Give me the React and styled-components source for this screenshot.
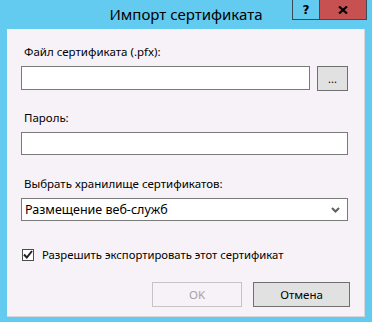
import React from 'react';
import styled, { createGlobalStyle } from 'styled-components';

const Global = createGlobalStyle`
  html, body {
    margin: 0;
    padding: 0;
    background: #63cbef;
  }
  * { box-sizing: border-box; }
`;

const Window = styled.div`
  width: 372px;
  height: 322px;
  background: #63cbef;
  display: flex;
  flex-direction: column;
  font-family: "Noto Sans", "Open Sans", sans-serif;
  color: #000;
`;

const TitleBar = styled.div`
  height: 29px;
  position: relative;
  display: flex;
  justify-content: center;
  align-items: flex-start;
`;

const Title = styled.div`
  font-size: 15px;
  line-height: 16px;
  padding-top: 6px;
`;

const Controls = styled.div`
  position: absolute;
  top: 0;
  right: 5px;
  display: flex;
`;

const CtrlButton = styled.div`
  height: 20px;
  width: ${p => p.$w}px;
  background: ${p => p.$bg};
  border: 1px solid #3c4a58;
  border-top: none;
  ${p => p.$close && 'border-left: none;'}
  display: flex;
  align-items: center;
  justify-content: center;
  font-weight: bold;
  font-size: 12px;
  font-family: "DejaVu Sans", sans-serif;
`;

const Panel = styled.div`
  flex: 1;
  margin: 0 7px 5px 7px;
  background: #f6f2f7;
  border-right: 1px solid #d9d5da;
  border-bottom: 1px solid #d9d5da;
  padding: 15px 16px 0 14px;
  display: flex;
  flex-direction: column;
  font-size: 11.5px;
`;

const Label = styled.div`
  padding-left: 3px;
  line-height: 16px;
  height: 16px;
  margin-top: ${p => p.$mt || 0}px;
  margin-bottom: ${p => p.$mb || 0}px;
`;

const Row = styled.div`
  display: flex;
  gap: 7px;
`;

const Input = styled.div`
  flex: ${p => (p.$grow ? 1 : 'none')};
  height: ${p => p.$h}px;
  background: #fff;
  border: 1px solid #7a7a7a;
`;

const Browse = styled.div`
  width: 31px;
  height: 25px;
  background: #e1e1e1;
  border: 1px solid #707070;
  display: flex;
  align-items: center;
  justify-content: center;
  font-size: 11px;
`;

const Select = styled.div`
  height: 23px;
  background: #fff;
  border: 1px solid #7a7a7a;
  display: flex;
  align-items: center;
  justify-content: space-between;
  padding: 0 7px 0 3px;
  font-size: 12.5px;
`;

const CheckRow = styled.div`
  display: flex;
  align-items: center;
  gap: 8px;
  margin-top: 26px;
  padding-left: 1px;
  font-size: 11.3px;
`;

const Box = styled.div`
  width: 12px;
  height: 12px;
  border: 1px solid #4d4d4d;
  background: #fff;
  display: flex;
  align-items: center;
  justify-content: center;
`;

const Footer = styled.div`
  display: flex;
  justify-content: flex-end;
  gap: 11px;
  margin-top: 20px;
  margin-right: -2px;
`;

const Button = styled.div`
  width: ${p => p.$w}px;
  height: 25px;
  background: ${p => (p.$disabled ? '#f6f2f7' : '#e1e1e1')};
  border: 1px solid ${p => (p.$disabled ? '#c4c4c4' : '#707070')};
  color: ${p => (p.$disabled ? '#a3a3a3' : '#000')};
  display: flex;
  align-items: center;
  justify-content: center;
`;

export default function App() {
  return (
    <>
      <Global />
      <Window>
        <TitleBar>
          <Title>Импорт сертификата</Title>
          <Controls>
            <CtrlButton $w={28} $bg="#63cbef">?</CtrlButton>
            <CtrlButton $w={47} $bg="#c75050" $close>
              <svg width="10" height="8" viewBox="0 0 10 8">
                <path d="M1 0.5 L9 7.5 M9 0.5 L1 7.5" stroke="#000" strokeWidth="2.2" />
              </svg>
            </CtrlButton>
          </Controls>
        </TitleBar>
        <Panel>
          <Label $mb={6}>Файл сертификата (.pfx):</Label>
          <Row>
            <Input $h={24} $grow />
            <Browse>...</Browse>
          </Row>
          <Label $mt={19} $mb={6}>Пароль:</Label>
          <Input $h={23} />
          <Label $mt={21} $mb={6}>Выбрать хранилище сертификатов:</Label>
          <Select>
            <span>Размещение веб-служб</span>
            <svg width="9" height="6" viewBox="0 0 9 6">
              <path d="M1 1 L4.5 4.5 L8 1" stroke="#606060" strokeWidth="2" fill="none" />
            </svg>
          </Select>
          <CheckRow>
            <Box>
              <svg width="10" height="9" viewBox="0 0 10 9">
                <path d="M1 4.5 L3.8 7.5 L9 1" stroke="#222" strokeWidth="2" fill="none" />
              </svg>
            </Box>
            <span>Разрешить экспортировать этот сертификат</span>
          </CheckRow>
          <Footer>
            <Button $w={90} $disabled>OK</Button>
            <Button $w={97}>Отмена</Button>
          </Footer>
        </Panel>
      </Window>
    </>
  );
}
